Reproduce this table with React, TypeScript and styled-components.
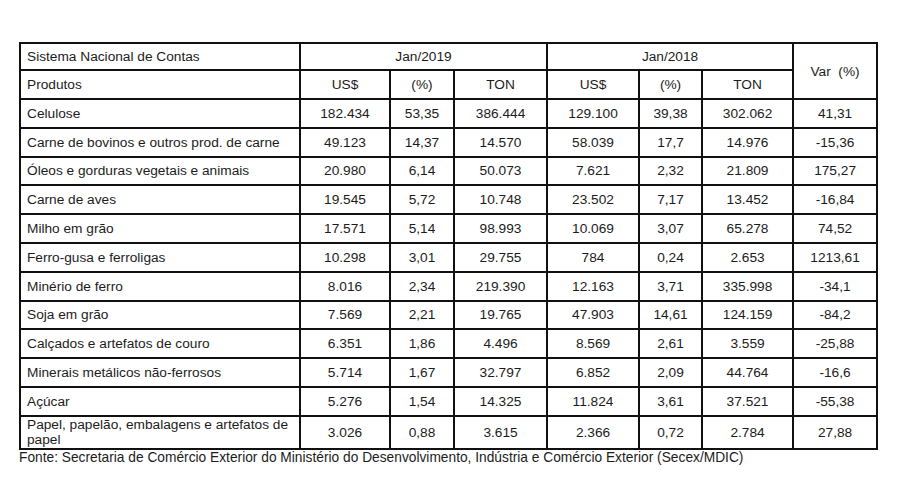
import React from "react";
import styled, { createGlobalStyle } from "styled-components";

const Global = createGlobalStyle`
  html, body { margin: 0; padding: 0; background: #fff; }
  body { font-family: "Liberation Sans", Arial, sans-serif; color: #1c1c1c; }
`;

const Page = styled.div`
  width: 900px;
  height: 500px;
  padding: 42px 0 0 19px;
  box-sizing: border-box;
`;

const Table = styled.table`
  border-collapse: collapse;
  table-layout: fixed;
  width: 857px;
  font-size: 13.7px;
  border: 2px solid #111;
`;

const Cell = styled.td<{ $left?: boolean; $h?: number }>`
  border: 2px solid #111;
  padding: 0 ${(p) => (p.$left ? "6px" : "2px")};
  text-align: ${(p) => (p.$left ? "left" : "center")};
  vertical-align: middle;
  height: ${(p) => (p.$h ? `${p.$h}px` : "auto")};
  line-height: 15px;
  box-sizing: border-box;
  white-space: normal;
`;

const Note = styled.div`
  font-size: 13.75px;
  margin-top: 0;
  line-height: 16px;
  color: #1c1c1c;
`;

const widths = [280, 90, 64, 93, 92, 63, 91, 84];

const rows: string[][] = [
  ["Celulose", "182.434", "53,35", "386.444", "129.100", "39,38", "302.062", "41,31"],
  ["Carne de bovinos e outros prod. de carne", "49.123", "14,37", "14.570", "58.039", "17,7", "14.976", "-15,36"],
  ["Óleos e gorduras vegetais e animais", "20.980", "6,14", "50.073", "7.621", "2,32", "21.809", "175,27"],
  ["Carne de aves", "19.545", "5,72", "10.748", "23.502", "7,17", "13.452", "-16,84"],
  ["Milho em grão", "17.571", "5,14", "98.993", "10.069", "3,07", "65.278", "74,52"],
  ["Ferro-gusa e ferroligas", "10.298", "3,01", "29.755", "784", "0,24", "2.653", "1213,61"],
  ["Minério de ferro", "8.016", "2,34", "219.390", "12.163", "3,71", "335.998", "-34,1"],
  ["Soja em grão", "7.569", "2,21", "19.765", "47.903", "14,61", "124.159", "-84,2"],
  ["Calçados e artefatos de couro", "6.351", "1,86", "4.496", "8.569", "2,61", "3.559", "-25,88"],
  ["Minerais metálicos não-ferrosos", "5.714", "1,67", "32.797", "6.852", "2,09", "44.764", "-16,6"],
  ["Açúcar", "5.276", "1,54", "14.325", "11.824", "3,61", "37.521", "-55,38"],
  ["Papel, papelão, embalagens e artefatos de papel", "3.026", "0,88", "3.615", "2.366", "0,72", "2.784", "27,88"],
];

export default function App() {
  return (
    <Page>
      <Global />
      <Table>
        <colgroup>
          {widths.map((w, i) => (
            <col key={i} style={{ width: w }} />
          ))}
        </colgroup>
        <tbody>
          <tr>
            <Cell $left $h={27}>Sistema Nacional de Contas</Cell>
            <Cell colSpan={3}>Jan/2019</Cell>
            <Cell colSpan={3}>Jan/2018</Cell>
            <Cell rowSpan={2}>Var&nbsp; (%)</Cell>
          </tr>
          <tr>
            <Cell $left $h={29}>Produtos</Cell>
            <Cell>US$</Cell>
            <Cell>(%)</Cell>
            <Cell>TON</Cell>
            <Cell>US$</Cell>
            <Cell>(%)</Cell>
            <Cell>TON</Cell>
          </tr>
          {rows.map((r, i) => (
            <tr key={i}>
              {r.map((c, j) => (
                <Cell key={j} $left={j === 0} $h={i === rows.length - 1 ? 33 : 28.8}>
                  {c}
                </Cell>
              ))}
            </tr>
          ))}
        </tbody>
      </Table>
      <Note>
        Fonte: Secretaria de Comércio Exterior do Ministério do Desenvolvimento, Indústria e Comércio Exterior (Secex/MDIC)
      </Note>
    </Page>
  );
}
